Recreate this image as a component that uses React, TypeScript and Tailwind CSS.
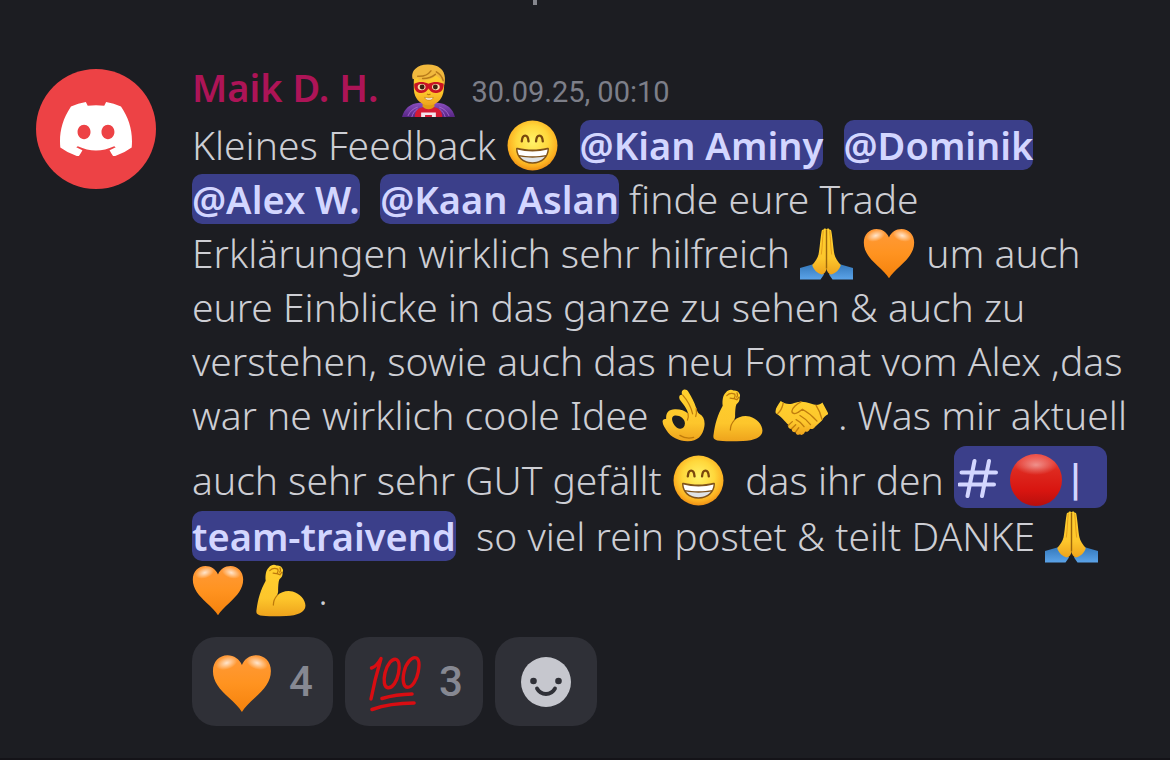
import type { ReactNode } from 'react';

type IconProps = { className: string };

function Defs() {
  return (
    <svg aria-hidden="true" className="absolute size-0">
      <defs>
        <radialGradient id="face" cx="50%" cy="42%" r="58%">
          <stop offset="0" stopColor="#fff36a" />
          <stop offset=".55" stopColor="#ffd73b" />
          <stop offset=".85" stopColor="#fcb021" />
          <stop offset="1" stopColor="#ee9015" />
        </radialGradient>
        <linearGradient id="skin" x1="0" y1="0" x2="0" y2="1">
          <stop offset="0" stopColor="#ffd02e" />
          <stop offset=".65" stopColor="#fdc62c" />
          <stop offset="1" stopColor="#eea31c" />
        </linearGradient>
        <linearGradient id="heart" x1="0" y1="0" x2="0" y2="1">
          <stop offset="0" stopColor="#ff9a3a" />
          <stop offset=".5" stopColor="#ff9320" />
          <stop offset="1" stopColor="#f5820c" />
        </linearGradient>
        <radialGradient id="shine">
          <stop offset="0" stopColor="#fff" stopOpacity=".75" />
          <stop offset="1" stopColor="#fff" stopOpacity="0" />
        </radialGradient>
        <linearGradient id="sleeve" x1="0" y1="0" x2="0" y2="1">
          <stop offset="0" stopColor="#3478bb" />
          <stop offset="1" stopColor="#5ba3e8" />
        </linearGradient>
        <linearGradient id="ball" x1="0" y1="0" x2="0" y2="1">
          <stop offset="0" stopColor="#f0554c" />
          <stop offset=".3" stopColor="#de2a20" />
          <stop offset=".7" stopColor="#d81510" />
          <stop offset="1" stopColor="#b80f0d" />
        </linearGradient>
        <radialGradient id="gloss">
          <stop offset="0" stopColor="#fff" stopOpacity=".45" />
          <stop offset="1" stopColor="#fff" stopOpacity="0" />
        </radialGradient>
        <linearGradient id="cape" x1="0" y1="0" x2="0" y2="1">
          <stop offset="0" stopColor="#8a4fc0" />
          <stop offset="1" stopColor="#572584" />
        </linearGradient>
      </defs>
    </svg>
  );
}

function Grin({ className }: IconProps) {
  return (
    <svg viewBox="0 0 52 52" role="img" aria-label="Strahlendes Gesicht" className={className}>
      <circle cx="26" cy="26" r="24.500" fill="url(#face)" />
      <path d="M15.500 22c.2-3.600 1.500-5.700 3.300-5.700s3.100 2.100 3.300 5.700M29.500 22c.2-3.600 1.500-5.700 3.300-5.700s3.100 2.100 3.300 5.700" fill="none" stroke="#79480d" strokeWidth="2.300" strokeLinecap="round" />
      <path d="M9.800 29.300c0-1 .8-1.400 1.800-1.100 8.600 2.300 20.200 2.300 28.800 0 1-.3 1.800.1 1.800 1.100-.2 8.500-6.500 14.700-16.200 14.700S10 37.800 9.800 29.300z" fill="#80531a" />
      <path d="M11.200 30c9 2.500 20.600 2.500 29.600 0-.2 2-.7 3.700-1.500 5.200-8 1.700-18.600 1.700-26.600 0-.8-1.500-1.300-3.200-1.500-5.200z" fill="#fff" />
      <path d="M13.800 36.900c7.500 1.400 16.900 1.400 24.400 0-2.300 3.400-6.500 5.500-12.200 5.500s-9.900-2.100-12.200-5.500z" fill="#dfe3e6" />
    </svg>
  );
}

function Heart({ className }: IconProps) {
  return (
    <svg viewBox="0 0 52 52" role="img" aria-label="Oranges Herz" className={className}>
      <path d="M25.500 50.200C23.200 46.500 19 42.500 14.200 38 6.700 31 .8 24.600.8 15.300.8 7.400 6.300 2 13.200 2c5.600 0 10.200 3.200 12.300 8.300C27.600 5.200 32.200 2 37.800 2c6.900 0 12.400 5.400 12.400 13.300 0 9.300-5.900 15.700-13.400 22.700-4.800 4.500-9 8.500-11.300 12.200z" fill="url(#heart)" />
      <ellipse cx="12.500" cy="8.500" rx="9.500" ry="5.500" fill="url(#shine)" transform="rotate(-18 12.500 8.500)" />
      <ellipse cx="38.500" cy="8.500" rx="9.500" ry="5.500" fill="url(#shine)" transform="rotate(18 38.500 8.500)" />
    </svg>
  );
}

function Pray({ className }: IconProps) {
  return (
    <svg viewBox="0 0 53 52" role="img" aria-label="Gefaltete Hände" className={className}>
      <path d="M0 40.500 14 36.500 24 47 20.500 52H0zM53 40.500 39 36.500 29 47 32.500 52H53z" fill="url(#sleeve)" />
      <path d="M26.500 1.800c-.8-1.300-2.800-1-3.200.6-.4-.2-1.500.1-1.700 1.500C20.200 12 19.800 21 18.500 27c-.6 3-3.400 7.300-6.300 10.500 1.200 4.500 5.300 8.700 9.800 9.600 2.500-.8 4.500-3.400 4.500-6.300 0 2.900 2 5.500 4.500 6.300 4.500-.9 8.600-5.100 9.800-9.600-2.900-3.200-5.700-7.500-6.300-10.500-1.300-6-1.700-15-3.100-23.100-.2-1.400-1.300-1.700-1.700-1.500-.4-1.600-2.400-1.900-3.200-.6z" fill="url(#skin)" />
      <path d="M26.500 2v39" stroke="#9b650d" strokeWidth="1.400" />
      <path d="M23.300 3c-.8 8-1 17-2 24M29.700 3c.8 8 1 17 2 24" fill="none" stroke="#e29a18" strokeWidth=".9" />
    </svg>
  );
}

function OkHand({ className }: IconProps) {
  return (
    <svg viewBox="0 0 52 52" role="img" aria-label="OK-Zeichen" className={className}>
      <path fill="url(#skin)" fillRule="evenodd" d="M22.500 2.500c1.200-2.600 4.700-2.600 6.300.2 3.200 5.300 6 10.300 7.700 16 .8 2.300 1.300 4.300 3 5.700 4.500 2.600 5.800 6.800 5 12.300C43 46 37.500 51 28.500 51.300 20 51.500 11.500 47.500 7.300 40.500c-1.500-2.500-3.700-5.200-3.800-8.500 0-2 1.500-3 3.500-2.500C6.700 23 9.500 20 15.500 19.800c5-.2 10 1.200 13 4.200-.8-3.500-2.500-6-4.500-8.700-2-2.800-4.300-4.500-4.200-7.300.1-2 1.700-2.800 3.200-2.200-.7-1-.9-2.300-.5-3.300zM15.500 26c-2.600.3-3.200 3-2.300 5.600 1.300 3.800 4 7 7.300 7.400 3 .4 4.700-2 4.900-4.800.4-5-4.900-8.700-9.900-8.200z" />
      <path d="M23.300 6c4 4.500 8 11 9.700 18.500M28.500 24c.6 2.500.2 4.500-.6 6.500M36.500 19c.5 3 .3 5.500-.5 8M20.500 45.500c4 2.500 9 3.300 13.500 2" fill="none" stroke="#bf7c0c" strokeWidth="1.200" strokeLinecap="round" />
    </svg>
  );
}

function Muscle({ className }: IconProps) {
  return (
    <svg viewBox="0 0 52 52" role="img" aria-label="Angespannter Bizeps" className={className}>
      <path d="M10.500 16.500C9.800 11 11 5.500 13.600 3.500 15.500.8 19 .2 21 1.500c2.500-.3 5 .6 5.600 2.600 1 .9 1.300 2.700.4 4 .4 2.600-.6 5.300-3 6.800-1 2-1.300 7.500-1.300 11.600 0 1.500-.6 3-.9 4.300C25.500 27 32 25.500 37 27c6.800 2 12.500 8 12.500 14 0 6.500-8.200 9.700-19 10-9 .3-20.500.5-25.300-.5C1.700 49.700 1 48 1.500 45 3 34 5.500 25.500 10.500 16.500z" fill="url(#skin)" />
      <path d="M21.800 30.800c-2.500 2.700-3.800 5.500-3.800 9.500M14.500 6.500c2-2 5-2.600 7.800-1.500.8 1.800.1 4-1.500 4.500l-3-.5M21.500 9.500l3 1 1.800-2.400M24.500 3.800c.8 1.500.8 3-.3 4.200" fill="none" stroke="#bd790c" strokeWidth="1.200" strokeLinecap="round" />
    </svg>
  );
}

function Handshake({ className }: IconProps) {
  return (
    <svg viewBox="0 0 52 52" role="img" aria-label="Händeschütteln" className={className}>
      <path d="M5.600 11.800c3.500 2.500 7.200 3.700 11.200 2.600 3.400-1 6-2.300 9.500-1.800 6 .4 10 2.700 14 3 2.800 0 4.700-.8 6.200-2.300l6 11.200c-3 1.800-5.400 3.800-6.400 6.500l-6.700 6c-1.300 2-3.300 2.700-5 2-.9 2.500-3 3.500-4.900 2.800-1 2.800-3.200 4-5 2.700-2.500 1.300-4.300-.2-4.200-2.200-2.800.6-4.100-1.200-3.700-3-3 .3-4.300-1.900-3.500-4.200-3.800-3.300-6-7.300-12.300-11.300C-.5 20 3 15.500 5.600 11.800z" fill="url(#skin)" />
      <path d="M25.500 12.600c-4 1.900-8.700 6-8.900 9-.1 2.800 3.600 3.300 6.100 1.300l4.200-3c4.900 2.800 10 6.600 14.300 11.600M24.500 26c4 2.200 7.500 5.300 10.300 9M20.700 30c3 1.500 5.800 3.800 7.800 7M13 35.700l4-3.700M16.300 39l4-4M20.300 42l3-4M40.200 15.800c2.600 4 4.500 7.700 5.900 14M8 14c-1 5-3 8-5.300 10" fill="none" stroke="#c07d0e" strokeWidth="1.300" strokeLinecap="round" />
    </svg>
  );
}

function RedCircle({ className }: IconProps) {
  return (
    <svg viewBox="0 0 52 52" role="img" aria-label="Roter Kreis" className={className}>
      <circle cx="26" cy="26" r="26" fill="url(#ball)" />
      <ellipse cx="26" cy="11" rx="21" ry="10" fill="url(#gloss)" />
    </svg>
  );
}

function Hundred({ className }: IconProps) {
  return (
    <svg viewBox="0 0 58 58" role="img" aria-label="100 Punkte" className={className}>
      <g fill="none" stroke="#d80d12" strokeLinecap="round" strokeLinejoin="round">
        <path d="M6.500 13C10 12 13.500 8 16 3.500 12 17 8.500 31 6 44" strokeWidth="3.400" />
        <path d="M31.500 4.500c-4.500-1.500-9.500 5-11.500 13.500-1.800 8-.8 14.500 3 14.800 4.500.3 9-6.500 10.500-14.500 1.200-7 .8-12.500-2-13.800z" strokeWidth="3.400" />
        <path d="M51.500 3c-4.500-2-10.500 5-12.500 14-1.800 8.500-.5 15.300 3.700 15.300 4.600 0 9-7.300 10.500-15.300C54.500 10 54.300 4.500 51.500 3z" strokeWidth="3.400" />
        <path d="M17 43.500c9-2.700 19-4.300 30-4.500M7 54.500c12.500-4.500 27-6.500 42-6.500" strokeWidth="3.600" />
      </g>
    </svg>
  );
}

function Hero({ className }: IconProps) {
  return (
    <svg viewBox="0 0 54 54" role="img" aria-label="Superheld" className={className}>
      <path d="M0 54c2-8 8-14 18-14.500h18C46 40 52 46 54 54z" fill="url(#cape)" />
      <path d="M6 53c2-5 6-8 10-9M10 54c1-4 3-6 6-8M48 53c-2-5-6-8-10-9M44 54c-1-4-3-6-6-8" fill="none" stroke="#a96ad1" strokeWidth=".9" />
      <path d="M13 54c0-6 3-9 8-10h12c5 1 8 4 8 10z" fill="#d51a34" />
      <path d="M19.500 49.500h15V54h-4v-2h-7v2h-4z" fill="#f3e4ec" />
      <path d="M21 34h12v9c-2 4-10 4-12 0z" fill="#e19b12" />
      <path d="M12 18C12 8 18 4 27 4s16 4 16 14c0 6-.3 10.500-2 14.500C38.500 38.500 33 42 27.500 42S16 38.500 13.500 32.500C11.800 28.500 12 24 12 18z" fill="url(#skin)" />
      <path d="M11 15.500C9.500 11 11 7 14 4.500 17 1.500 21.500.3 27 .5 37 .5 43.500 6 43.700 14c.1 3-.2 5.500-.7 7.500-1.500-3.500-3.500-7-8.500-9.500-5.500 4.500-12.500 6-18.500 3.500l1.500-1.500z" fill="#f1b93e" />
      <path d="M16 12.500c6 .5 10.500-1.500 13.500-5.500M21 14.800c5 .2 9.500-1.500 13-4.300M35 8c3.500 2 6 5 7 9" fill="none" stroke="#b87a1a" strokeWidth="1.500" strokeLinecap="round" />
      <path d="M12.500 20c5-2.500 10-2 14.500 0 4.500-2 9.500-2.500 15.500 0 .2 7-3.500 9.500-8.500 9.500-4 0-5.500-2.500-7-4.500-1.500 2-3 4.500-7 4.500-5.500 0-8-3.500-7.500-9.500z" fill="#c91424" />
      <ellipse cx="20" cy="23.500" rx="4" ry="3.200" fill="#f9dcae" />
      <ellipse cx="34.500" cy="23.500" rx="4" ry="3.200" fill="#f9dcae" />
      <circle cx="20.500" cy="23.500" r="2.500" fill="#3c2410" />
      <circle cx="34" cy="23.500" r="2.500" fill="#3c2410" />
      <path d="M25.500 30.500c1 .8 2.500.8 3.500 0" fill="none" stroke="#bd790c" strokeWidth="1.200" />
      <path d="M23 34c3 .8 6 .8 9 0-.8 2.300-2.500 2.800-4.500 2.800S23.800 36.300 23 34z" fill="#fff" stroke="#c07c18" strokeWidth=".7" />
    </svg>
  );
}

function DiscordMark({ className }: IconProps) {
  return (
    <svg viewBox="0 0 127.140 96.360" aria-hidden="true" className={className}>
      <path fill="#fff" d="M107.700 8.070A105.150 105.150 0 0 0 81.470 0a72.060 72.060 0 0 0-3.360 6.830 97.680 97.680 0 0 0-29.110 0A72.370 72.370 0 0 0 45.640 0a105.890 105.890 0 0 0-26.250 8.090C2.790 32.650-1.710 56.600.54 80.210a105.730 105.730 0 0 0 32.170 16.150 77.700 77.700 0 0 0 6.890-11.110 68.420 68.420 0 0 1-10.850-5.180c.91-.66 1.800-1.340 2.660-2a75.570 75.570 0 0 0 64.320 0c.87.710 1.760 1.390 2.660 2a68.680 68.680 0 0 1-10.870 5.190 77 77 0 0 0 6.890 11.100 105.250 105.250 0 0 0 32.190-16.140c2.640-27.380-4.510-51.110-18.900-72.150zM42.450 65.690C36.180 65.690 31 60 31 53s5-12.740 11.430-12.740S54 46 53.890 53s-5.050 12.690-11.440 12.690zm42.240 0C78.410 65.690 73.250 60 73.250 53s5-12.740 11.440-12.740S96.230 46 96.120 53s-5.040 12.690-11.430 12.690z" />
    </svg>
  );
}

function Smiley({ className }: IconProps) {
  return (
    <svg viewBox="0 0 50 50" aria-hidden="true" className={className}>
      <circle cx="25" cy="25" r="25" fill="#c6c7ce" />
      <circle cx="12.500" cy="24" r="3.300" fill="#2f3037" />
      <circle cx="37.500" cy="24" r="3.300" fill="#2f3037" />
      <path d="M16 31.500c4 7.300 14 7.300 18 0" fill="none" stroke="#2f3037" strokeWidth="3.800" strokeLinecap="round" />
    </svg>
  );
}

function Mention({ children }: { children: ReactNode }) {
  return (
    <a href="#mention" className="inline-block h-[50px] rounded-[10px] bg-[#3b3f8a] text-[38px] leading-[50px] font-semibold text-[#d3d6ff]">
      {children}
    </a>
  );
}

function Reaction({ label, count, children }: { label: string; count: number; children: ReactNode }) {
  return (
    <button aria-label={label} className="flex h-[89px] items-center gap-4 rounded-[24px] bg-[#2f3037] px-5 font-[Roboto,sans-serif] text-[42px] font-medium text-[#868892]">
      {children}
      <span>{count}</span>
    </button>
  );
}

const emoji = 'inline-block size-[53px] align-[-12px]';

export default function App() {
  return (
    <main className="flex min-h-screen flex-col border-b-2 border-[#141318] bg-[#1c1d22] font-['Noto_Sans',sans-serif] text-[#cdced4]">
      <Defs />
      <div className="flex h-[64px] justify-center pr-[100px]">
        <span className="h-[5px] w-[4px] bg-[#85868d]" />
      </div>
      <article className="flex gap-9 pr-5 pl-9">
        <div className="mt-[5px] flex size-[120px] shrink-0 items-center justify-center rounded-full bg-[#ed4245]">
          <DiscordMark className="w-[72px]" />
        </div>
        <div className="min-w-0 flex-1">
          <header className="flex h-[54px] items-baseline whitespace-nowrap">
            <h2 className="text-[38px] leading-[46px] font-semibold text-[#ad1457]">Maik D. H.</h2>
            <Hero className="ml-6 size-[53px] self-start" />
            <time className="ml-4 font-[Roboto,sans-serif] text-[29px] text-[#7d7f89]">30.09.25, 00:10</time>
          </header>
          <p className="text-[39px] leading-[54px] font-light">
            Kleines Feedback <Grin className={emoji} />
            &nbsp; <Mention>@Kian Aminy</Mention>&nbsp; <Mention>@Dominik</Mention>
            <br />
            <Mention>@Alex W.</Mention>&nbsp; <Mention>@Kaan Aslan</Mention> finde eure Trade
            <br />
            Erklärungen wirklich sehr hilfreich <Pray className={emoji} /> <Heart className={emoji} /> um auch
            <br />
            eure Einblicke in das ganze zu sehen &amp; auch zu
            <br />
            verstehen, sowie auch das neu Format vom Alex ,das
            <br />
            war ne wirklich coole Idee <OkHand className={emoji} />
            <Muscle className={emoji} /> <Handshake className={emoji} /> . Was mir aktuell
            <br />
            auch sehr sehr GUT gefällt <Grin className={emoji} />
            &nbsp; das ihr den{' '}
            <a href="#team-traivend" className="mt-1 mb-px inline-block h-[62px] w-[153px] rounded-[12px] bg-[#3b3f8a] pt-[7px] pl-1 leading-[54px] whitespace-nowrap text-[#d3d6ff]">
              <svg viewBox="0 0 40 42" aria-hidden="true" className="inline-block h-[42px] w-[40px] align-[-5px]">
                <path d="M16.500 3 9.500 38M31 3 24 38M3.500 14.500h34.500M1.500 26.500H36" fill="none" stroke="currentColor" strokeWidth="4" strokeLinecap="round" />
              </svg>
              <RedCircle className="ml-3 inline-block size-[52px] align-[-11px]" />
              <span className="ml-2 font-[Roboto,sans-serif] text-[44px] font-medium">|</span>
            </a>
            <br />
            <Mention>team-traivend</Mention>&nbsp; so viel rein postet &amp; teilt DANKE <Pray className={emoji} />
            <br />
            <Heart className={emoji} /> <Muscle className={emoji} /> .
          </p>
          <div className="mt-5 flex gap-3">
            <Reaction label="Oranges Herz, 4 Reaktionen" count={4}>
              <Heart className="mt-1 size-[61px]" />
            </Reaction>
            <Reaction label="100 Punkte, 3 Reaktionen" count={3}>
              <Hundred className="mt-1 size-[58px]" />
            </Reaction>
            <button aria-label="Reaktion hinzufügen" className="flex h-[89px] w-[102px] items-center justify-center rounded-[24px] bg-[#2f3037]">
              <Smiley className="size-[50px]" />
            </button>
          </div>
        </div>
      </article>
    </main>
  );
}
